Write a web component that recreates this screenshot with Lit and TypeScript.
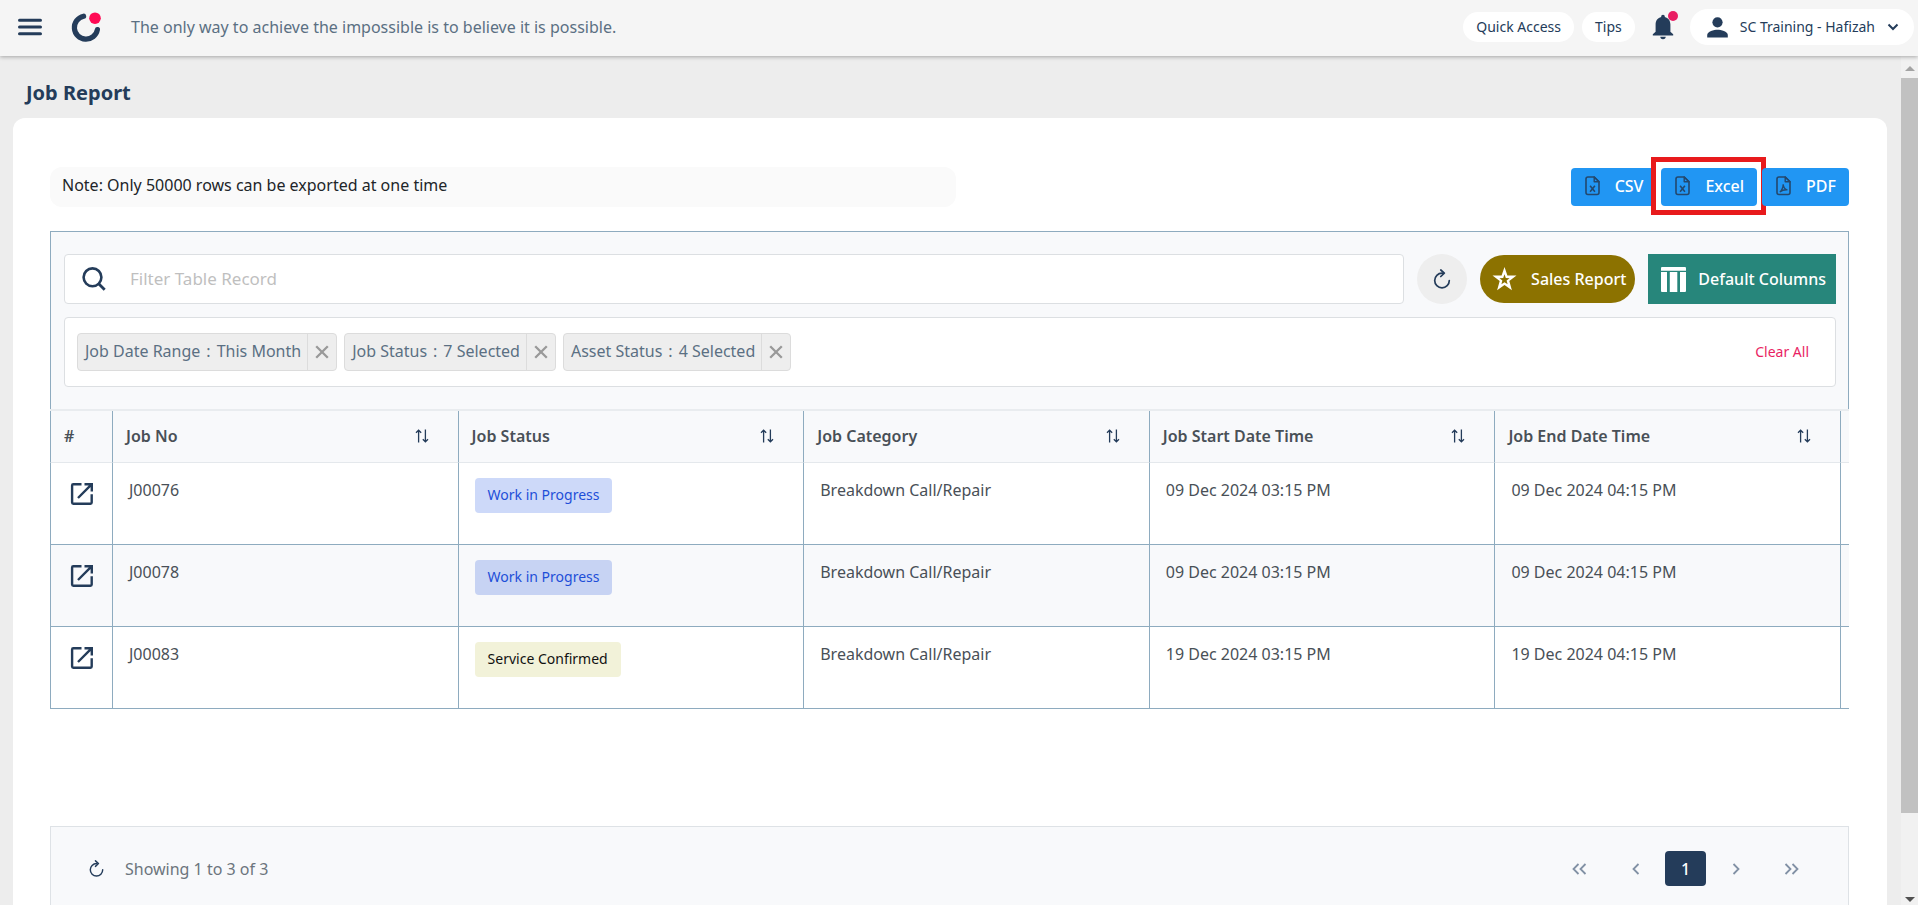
import { LitElement, html, css, svg, TemplateResult } from 'lit';
import { customElement, property, state } from 'lit/decorators.js';
import { classMap } from 'lit/directives/class-map.js';

interface Job {
  no: string;
  status: string;
  tone: 'progress' | 'confirmed';
  category: string;
  start: string;
  end: string;
}

const JOBS: Job[] = [
  { no: 'J00076', status: 'Work in Progress', tone: 'progress', category: 'Breakdown Call/Repair', start: '09 Dec 2024 03:15 PM', end: '09 Dec 2024 04:15 PM' },
  { no: 'J00078', status: 'Work in Progress', tone: 'progress', category: 'Breakdown Call/Repair', start: '09 Dec 2024 03:15 PM', end: '09 Dec 2024 04:15 PM' },
  { no: 'J00083', status: 'Service Confirmed', tone: 'confirmed', category: 'Breakdown Call/Repair', start: '19 Dec 2024 03:15 PM', end: '19 Dec 2024 04:15 PM' },
];

const COLUMNS = ['Job No', 'Job Status', 'Job Category', 'Job Start Date Time', 'Job End Date Time'];

const FILTERS = [
  { name: 'Job Date Range', value: 'This Month' },
  { name: 'Job Status', value: '7 Selected' },
  { name: 'Asset Status', value: '4 Selected' },
];

const icon = (w: number, h: number, box: string, body: TemplateResult | unknown) =>
  html`<svg width=${w} height=${h} viewBox=${box} fill="none" aria-hidden="true">${body}</svg>`;

const menuIcon = icon(24, 18, '0 0 24 18', svg`<path d="M1.5 2.3h21M1.5 9h21M1.5 15.7h21" stroke="#243c5a" stroke-width="3" stroke-linecap="round"/>`);
const logoIcon = icon(30, 32, '0 0 30 32', svg`<path d="M12.6 5.2A11.6 11.6 0 1 0 26.4 18.6" stroke="#243c5a" stroke-width="5.2" stroke-linecap="round"/><circle cx="24" cy="7.2" r="5.8" fill="#ff0a54"/>`);
const bellIcon = icon(22, 26, '0 0 22 26', svg`<path d="M11 .8c1 0 1.8.7 1.8 1.7v.6c3.4.8 5.6 3.6 5.6 7.4v7.2l2.8 2.6v1.2H.8v-1.2l2.8-2.6v-7.2c0-3.800 2.200-6.600 5.600-7.400v-.6c0-1 .8-1.700 1.800-1.700z" fill="#243c5a"/><path d="M8.300 22.800h5.400a2.700 2.400 0 0 1-5.400 0z" fill="#243c5a"/>`);
const personIcon = icon(21, 21, '0 0 21 21', svg`<circle cx="10.500" cy="5.300" r="5.100" fill="#243c5a"/><path d="M.2 20.400v-2.500c0-3.500 6.800-5.200 10.300-5.200s10.300 1.700 10.300 5.200v2.500z" fill="#243c5a"/>`);
const chevronDown = icon(12, 8, '0 0 12 8', svg`<path d="M1.500 1.500 6 6l4.500-4.500" stroke="#243c5a" stroke-width="2"/>`);
const searchIcon = icon(24, 24, '0 0 24 24', svg`<circle cx="10.500" cy="10.300" r="8.900" stroke="#243c5a" stroke-width="2.600"/><path d="m16.700 16.700 6 6" stroke="#243c5a" stroke-width="2.800"/>`);
const refreshIcon = (size: number) => icon(size, size, '0 0 18 20', svg`<path d="M9.300 4.200H9A7.300 7.300 0 1 0 16.300 11.500" stroke="#243c5a" stroke-width="1.700" stroke-linecap="round"/><path d="m7.800 1 3.500 3.200-3.500 3.300" stroke="#243c5a" stroke-width="1.700" stroke-linecap="round" stroke-linejoin="round"/>`);
const starIcon = icon(25, 24, '0 0 24 24', svg`<path fill-rule="evenodd" d="m12 0 2.900 8.400 9.100.2-7.200 5.500 2.600 9.100L12 18l-7.400 5.200 2.600-9.100L0 8.600l9.100-.2zM12 7.300l-1.300 3.800-3.800.1 3 2.400-1 3.700 3.100-2.100 3.100 2.100-1-3.700 3-2.400-3.800-.1z" fill="#fff"/>`);
const columnsIcon = icon(25, 25, '0 0 25 25', svg`<path d="M0 1.300C0 .5.5 0 1.300 0h22.400c.8 0 1.300.5 1.300 1.300V3.700H0zM0 5h6v20H1.300C.5 25 0 24.500 0 23.700zM8.800 5h7.500v20H8.800zM19 5h6v18.700c0 .8-.5 1.300-1.300 1.300H19z" fill="#fff"/>`);
const sortIcon = icon(14, 14, '0 0 14 14', svg`<path d="M3.600 13.500V1.500M1 3.800l2.600-2.600 2.600 2.600M10.400.5v12M7.800 10.200l2.600 2.600 2.600-2.600" stroke="#243c5a" stroke-width="1.300"/>`);
const openIcon = icon(24, 24, '0 0 24 24', svg`<path d="M11.500 2.200H3.300c-.7 0-1.200.5-1.200 1.200v17.200c0 .7.500 1.200 1.200 1.200h17.200c.7 0 1.200-.5 1.200-1.200v-8.300" stroke="#243c5a" stroke-width="2.400"/><path d="M14.500 2.200h7.300v7.300M21.300 2.700 8 16" stroke="#243c5a" stroke-width="2.400"/>`);
const closeIcon = icon(14, 14, '0 0 14 14', svg`<path d="m1.200 1.200 11.600 11.600M12.800 1.200 1.200 12.800" stroke="#999" stroke-width="2.300"/>`);
const sheet = svg`<path d="M9.200 1H3a2 2 0 0 0-2 2v13.500a2 2 0 0 0 2 2h9a2 2 0 0 0 2-2V5.800z" stroke="#24486d" stroke-width="1.600" stroke-linejoin="round"/><path d="M9.200 1v4.800H14z" stroke="#24486d" stroke-width="1.400" stroke-linejoin="round"/>`;
const xlsIcon = icon(15, 20, '0 0 15 20', svg`${sheet}<path d="m5.100 9.800 4.800 6M9.900 9.800l-4.800 6" stroke="#24486d" stroke-width="1.600"/>`);
const pdfIcon = icon(15, 20, '0 0 15 20', svg`${sheet}<path d="M3.800 16c1.500-.8 3.300-4.300 3.400-7.800.3 3 1.800 5.300 4.300 5.600-2.800-.3-5.500.500-7.700 2.200" stroke="#24486d" stroke-width="1.300"/>`);
const pageGlyph = (d: string, w: number) => icon(w, 12, `0 0 ${w} 12`, svg`<path d=${d} stroke="#8291a5" stroke-width="1.800"/>`);

const base = css`
  * { box-sizing: border-box; }
  button { border: 0; margin: 0; padding: 0; background: none; color: inherit; font: inherit; cursor: pointer; }
  svg { display: block; flex: none; }
`;

@customElement('top-bar')
export class TopBar extends LitElement {
  static styles = [base, css`
    :host { display: block; position: relative; z-index: 1; }
    .bar { display: flex; align-items: center; height: 56px; padding: 0 4px 2px 18px; background: #f5f5f5; box-shadow: 0 1px 4px rgba(0, 0, 0, 0.3); color: #243c5a; font-size: 14px; line-height: 20px; }
    .brand { margin-left: 29px; }
    .quote { flex: 1; margin: 0 0 0 30px; color: #5b7083; font-size: 16px; line-height: 24px; white-space: nowrap; }
    .actions { display: flex; align-items: center; white-space: nowrap; }
    .pill { height: 30px; padding: 0 13px; margin-right: 8px; border-radius: 15px; background: #fff; }
    .bell { position: relative; margin: 0 12px 0 9px; padding: 0 4px 0 0; }
    .dot { position: absolute; top: -3px; right: 0; width: 10px; height: 10px; border-radius: 50%; background: #e91e63; }
    .user { display: flex; align-items: center; gap: 12px; height: 36px; padding: 0 15px 0 17px; border-radius: 18px; background: #fff; }
  `];

  render() {
    return html`
      <header class="bar">
        <button aria-label="Menu">${menuIcon}</button>
        <span class="brand">${logoIcon}</span>
        <p class="quote">The only way to achieve the impossible is to believe it is possible.</p>
        <nav class="actions">
          <button class="pill">Quick Access</button>
          <button class="pill">Tips</button>
          <button class="bell" aria-label="Notifications">${bellIcon}<span class="dot"></span></button>
          <button class="user">${personIcon}<span>SC Training - Hafizah</span>${chevronDown}</button>
        </nav>
      </header>`;
  }
}

@customElement('filter-chip')
export class FilterChip extends LitElement {
  @property() name = '';
  @property() value = '';

  static styles = [base, css`
    :host { display: flex; height: 38px; border: 1px solid #dcdcdc; border-radius: 4px; background: #eee; color: #5b7083; line-height: 34px; white-space: nowrap; }
    .text { display: flex; gap: 6px; padding: 0 6px 0 7px; border-right: 1px solid #dcdcdc; }
    .close { display: grid; place-items: center; width: 28px; }
  `];

  render() {
    return html`
      <span class="text"><span>${this.name}</span><span>:</span><span>${this.value}</span></span>
      <button class="close" aria-label="Remove ${this.name}">${closeIcon}</button>`;
  }
}

@customElement('job-table')
export class JobTable extends LitElement {
  static styles = [base, css`
    :host { display: block; }
    table { width: 100%; table-layout: fixed; border-collapse: separate; border-spacing: 0; border-top: 2px solid #e9ecef; color: #495057; }
    .c-open { width: 63px; }
    .c-more { width: 8px; }
    th, td { border-right: 1px solid #8eabbf; text-align: left; white-space: nowrap; overflow: hidden; }
    th:first-child, td:first-child { border-left: 1px solid #8eabbf; }
    th { height: 52px; padding: 0 29px 2px 13px; border-bottom: 1px solid #e4e8ec; background: #f8f9fb; font-weight: 600; }
    .head { display: flex; align-items: center; justify-content: space-between; }
    td { height: 82px; padding: 15px 15px 0 16px; border-bottom: 1px solid #8eabbf; vertical-align: top; line-height: 24px; }
    th:last-child, td:last-child { border-right: 0; padding: 0; }
    tr:nth-child(even) td { background: #f8f9fb; }
    .open { display: block; margin: 4px 0 0 3px; }
    .badge { display: inline-block; height: 35px; padding: 0 13px; border-radius: 4px; font-size: 14px; line-height: 33px; }
    .progress { background: #cdd9f9; color: #1d4ed8; }
    tr:nth-child(even) .progress { background: #c7d3f3; }
    .confirmed { background: #f2f2d9; color: #111; }
  `];

  render() {
    return html`
      <table>
        <colgroup><col class="c-open" />${COLUMNS.map(() => html`<col />`)}<col class="c-more" /></colgroup>
        <thead>
          <tr>
            <th scope="col">#</th>
            ${COLUMNS.map((c) => html`<th scope="col"><div class="head">${c}<button aria-label="Sort by ${c}">${sortIcon}</button></div></th>`)}
            <th></th>
          </tr>
        </thead>
        <tbody>
          ${JOBS.map((j) => html`
            <tr>
              <td><button class="open" aria-label="Open ${j.no}">${openIcon}</button></td>
              <td>${j.no}</td>
              <td><span class=${classMap({ badge: true, [j.tone]: true })}>${j.status}</span></td>
              <td>${j.category}</td>
              <td>${j.start}</td>
              <td>${j.end}</td>
              <td></td>
            </tr>`)}
        </tbody>
      </table>`;
  }
}

@customElement('app-root')
export class AppRoot extends LitElement {
  @state() private query = '';

  static styles = [base, css`
    :host { display: flex; flex-direction: column; height: 100vh; overflow: hidden; background: #ededed; color: #212529; font: 16px/24px "Noto Sans", sans-serif; }
    .body { display: flex; flex: 1; min-height: 0; }
    .page { flex: 1; min-width: 0; padding: 0 14px 0 13px; overflow: hidden; }
    h1 { margin: 0; padding: 24px 13px 12px; color: #243c5a; font-size: 20px; line-height: 26px; font-weight: 700; }
    .card { padding: 49px 38px 24px 37px; border-radius: 12px; background: #fff; }
    .export { display: flex; justify-content: space-between; align-items: flex-start; margin-bottom: 24px; }
    .note { width: calc(50% + 6px); height: 40px; margin: 0; padding: 0 12px; border-radius: 12px; background: #fafafa; line-height: 36px; }
    .buttons { display: flex; gap: 5px; padding-top: 1px; }
    .export-btn { position: relative; display: flex; align-items: center; gap: 15px; height: 38px; padding: 0 13px 2px 14px; border-radius: 4px; background: #2196f3; color: #fff; font-weight: 500; }
    .marked::after { content: ""; position: absolute; inset: -11px -9px -9px -10px; border: 5px solid #e81a1c; }
    .panel { padding: 22px 12px 22px 13px; border: 1px solid #8eabbf; border-bottom: 0; background: #f8f9fb; }
    .tools { display: flex; gap: 13px; height: 50px; margin-bottom: 13px; }
    .search { display: flex; flex: 1; align-items: center; gap: 24px; padding: 0 17px; border: 1px solid #dcdfe2; border-radius: 4px; background: #fff; }
    .search input { flex: 1; min-width: 0; padding: 0; border: 0; outline: 0; background: none; color: #243c5a; font: inherit; font-size: 17px; }
    .search input::placeholder { color: #bfbfbf; opacity: 1; }
    .refresh { display: grid; place-items: center; width: 50px; border-radius: 50%; background: #eee; }
    .tool { display: flex; align-items: center; color: #fff; font-weight: 500; white-space: nowrap; }
    .sales { align-self: center; gap: 14px; height: 48px; padding: 0 9px 0 12px; border-radius: 24px; background: #8c7200; }
    .default { gap: 12px; padding: 0 10px 0 13px; background: #27867b; }
    .filters { display: flex; align-items: center; gap: 7px; height: 70px; padding: 0 26px 0 12px; border: 1px solid #dcdfe2; border-radius: 4px; background: #fff; }
    .clear { margin-left: auto; color: #e91e63; font-size: 14px; }
    .pager { display: flex; align-items: center; justify-content: space-between; margin-top: 117px; padding: 24px 30px 48px 37px; border: 1px solid #dee2e6; background: #f8f9fb; color: #6c757d; }
    .summary { display: flex; align-items: center; gap: 20px; }
    .pages { display: flex; gap: 9px; }
    .page-btn { display: grid; place-items: center; width: 41px; height: 35px; border-radius: 4px; }
    .edge { width: 53px; }
    .current { background: #243c5a; color: #fff; font-weight: 500; }
    .scroll { display: flex; flex-direction: column; align-items: center; width: 17px; background: #f1f1f1; }
    .scroll-up, .scroll-down { width: 0; height: 0; border: 5px solid transparent; }
    .scroll-up { margin: 5px 0 7px; border-bottom-color: #a3a3a3; }
    .scroll-down { margin-bottom: -2px; border-top-color: #505050; }
    .thumb { flex: 735; width: 17px; background: #c1c1c1; }
    .rest { flex: 84; }
  `];

  render() {
    return html`
      <top-bar></top-bar>
      <div class="body">
        <main class="page">
          <h1>Job Report</h1>
          <section class="card">
            <div class="export">
              <p class="note">Note: Only 50000 rows can be exported at one time</p>
              <div class="buttons">
                <button class="export-btn">${xlsIcon}CSV</button>
                <button class="export-btn marked">${xlsIcon}Excel</button>
                <button class="export-btn">${pdfIcon}PDF</button>
              </div>
            </div>
            <div class="panel">
              <div class="tools">
                <label class="search">
                  ${searchIcon}
                  <input type="text" placeholder="Filter Table Record" aria-label="Filter Table Record"
                    .value=${this.query} @input=${(e: Event) => (this.query = (e.target as HTMLInputElement).value)} />
                </label>
                <button class="refresh" aria-label="Refresh">${refreshIcon(20)}</button>
                <button class="tool sales">${starIcon}Sales Report</button>
                <button class="tool default">${columnsIcon}Default Columns</button>
              </div>
              <div class="filters">
                ${FILTERS.map((f) => html`<filter-chip .name=${f.name} .value=${f.value}></filter-chip>`)}
                <button class="clear">Clear All</button>
              </div>
            </div>
            <job-table></job-table>
            <footer class="pager">
              <div class="summary">
                <button aria-label="Reload">${refreshIcon(17)}</button>
                <span>Showing 1 to 3 of 3</span>
              </div>
              <nav class="pages" aria-label="Pages">
                <button class="page-btn edge" aria-label="First page">${pageGlyph('M6.500 1 1.500 6l5 5M13.500 1l-5 5 5 5', 15)}</button>
                <button class="page-btn" aria-label="Previous page">${pageGlyph('M6.500 1l-5 5 5 5', 8)}</button>
                <button class="page-btn current" aria-current="page">1</button>
                <button class="page-btn" aria-label="Next page">${pageGlyph('M1.500 1l5 5-5 5', 8)}</button>
                <button class="page-btn edge" aria-label="Last page">${pageGlyph('M1.500 1l5 5-5 5M8.500 1l5 5-5 5', 15)}</button>
              </nav>
            </footer>
          </section>
        </main>
        <div class="scroll" aria-hidden="true">
          <span class="scroll-up"></span>
          <span class="thumb"></span>
          <span class="rest"></span>
          <span class="scroll-down"></span>
        </div>
      </div>`;
  }
}
